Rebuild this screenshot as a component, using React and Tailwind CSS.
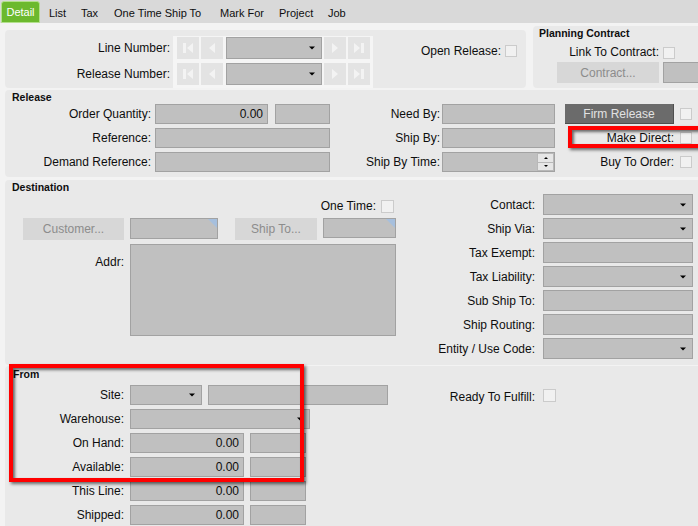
import React from "react";

// Release line detail form — gray desktop-style panels

const Cb = ({ className = "" }) => (
  <div className={`w-[12px] h-[12px] shrink-0 bg-[#f1f1f1] border border-[#cbcbcb] ${className}`} />
);

const Box = ({ className = "", children }) => (
  <div className={`relative shrink-0 bg-[#c0c0c0] border border-[#a2a2a2] ${className}`}>{children}</div>
);

const Arrow = () => (
  <span className="absolute right-[6px] top-1/2 -translate-y-1/2 border-x-[3px] border-x-transparent border-t-[3px] border-t-black" />
);

const Num = ({ children }) => (
  <span className="absolute right-[4px] inset-y-0 flex items-center">{children}</span>
);

const Corner = () => (
  <span className="absolute block w-0 h-0 top-0 right-0 border-solid border-l-[9px] border-l-transparent border-t-[9px] border-t-[#a6bfdd]" />
);

function NavBtn({ kind }) {
  return (
    <div className="w-[22px] h-[22px] shrink-0 bg-[#e3e3e3] flex items-center justify-center">
      <svg width="14" height="14" viewBox="0 0 14 14" fill="#f3f3f3">
        {kind === "first" && (
          <>
            <rect x="2" y="2" width="3" height="10" />
            <polygon points="12,2 12,12 6,7" />
          </>
        )}
        {kind === "prev" && <polygon points="10,2 10,12 4,7" />}
        {kind === "next" && <polygon points="4,2 4,12 10,7" />}
        {kind === "last" && (
          <>
            <polygon points="2,2 2,12 8,7" />
            <rect x="9" y="2" width="3" height="10" />
          </>
        )}
      </svg>
    </div>
  );
}

function NavRow() {
  return (
    <div className="flex gap-[2px] h-[22px]">
      <NavBtn kind="first" />
      <NavBtn kind="prev" />
      <Box className="ml-[1px] w-[96px] h-[22px]">
        <Arrow />
      </Box>
      <NavBtn kind="next" />
      <NavBtn kind="last" />
    </div>
  );
}

const Label = ({ className = "", children }) => (
  <div className={`shrink-0 text-right whitespace-nowrap ${className}`}>{children}</div>
);

const GrayBtn = ({ className = "", children }) => (
  <div className={`shrink-0 bg-[#d7d7d7] text-[#8c8c8c] flex items-center justify-center ${className}`}>
    {children}
  </div>
);

export default function App() {
  return (
    <div className="relative w-[698px] h-[526px] overflow-hidden bg-[#f3f3f3] text-[12px] text-[#0e0e0e] font-['Liberation_Sans',Arial,sans-serif] leading-none">
      {/* Tabs */}
      <div className="h-[23px] bg-[#d9d9d9] flex items-end text-[11px]">
        <div className="ml-[1px] w-[39px] h-[22px] bg-[#6cb92e] border border-[#b3e08c] rounded-t-[3px] text-white flex items-center justify-center">
          Detail
        </div>
        <div className="ml-[9px] w-[32px] h-[22px] flex items-center pt-[2px]">List</div>
        <div className="w-[33px] h-[22px] flex items-center pt-[2px]">Tax</div>
        <div className="w-[106px] h-[22px] flex items-center pt-[2px]">One Time Ship To</div>
        <div className="w-[59px] h-[22px] flex items-center pt-[2px]">Mark For</div>
        <div className="w-[49px] h-[22px] flex items-center pt-[2px]">Project</div>
        <div className="h-[22px] flex items-center pt-[2px]">Job</div>
      </div>

      {/* Top row */}
      <div className="flex items-start pt-[3px]">
        <div className="shrink-0 ml-[5px] mt-[4px] w-[521px] h-[58px] bg-[#e9e9e9] rounded-[4px] flex pt-[6px]">
          <div className="w-[165px] shrink-0 flex flex-col pt-[1px]">
            <Label className="h-[22px] flex items-center justify-end">Line Number:</Label>
            <Label className="mt-[4px] h-[22px] flex items-center justify-end">Release Number:</Label>
          </div>
          <div className="shrink-0 ml-[3px] w-[200px] h-[52px] bg-[#f5f5f5] pl-[4px] pt-[1px] flex flex-col gap-[4px]">
            <NavRow />
            <NavRow />
          </div>
          <div className="flex-1 flex items-center justify-end pr-[9px] h-[28px] pt-[2px]">
            <span className="mr-[4px]">Open Release:</span>
            <Cb />
          </div>
        </div>
        <div className="shrink-0 ml-[7px] w-[170px] h-[62px] bg-[#e9e9e9] rounded-l-[4px] flex flex-col">
          <div className="h-[14px] pl-[6px] flex items-center font-bold text-[10.5px]">Planning Contract</div>
          <div className="mt-[2px] h-[20px] flex items-center">
            <Label className="w-[126px]">Link To Contract:</Label>
            <Cb className="ml-[4px] mt-[2px]" />
          </div>
          <div className="flex">
            <GrayBtn className="ml-[24px] w-[102px] h-[21px]">Contract...</GrayBtn>
            <Box className="ml-[4px] w-[40px] h-[21px]" />
          </div>
        </div>
      </div>

      {/* Release */}
      <div className="ml-[5px] mt-[2px] w-[700px] h-[87px] bg-[#e9e9e9] rounded-[4px] flex flex-col">
        <div className="h-[14px] pl-[7px] flex items-center font-bold text-[10.5px] pt-[1px]">Release</div>
        <div className="flex">
          <div className="w-[325px] shrink-0 flex flex-col gap-[4px]">
            <div className="h-[20px] flex items-center">
              <Label className="w-[146px]">Order Quantity:</Label>
              <Box className="ml-[4px] w-[113px] h-[20px]"><Num>0.00</Num></Box>
              <Box className="ml-[7px] w-[55px] h-[20px]" />
            </div>
            <div className="h-[20px] flex items-center">
              <Label className="w-[146px]">Reference:</Label>
              <Box className="ml-[4px] w-[175px] h-[20px]" />
            </div>
            <div className="h-[20px] flex items-center">
              <Label className="w-[146px]">Demand Reference:</Label>
              <Box className="ml-[4px] w-[175px] h-[20px]" />
            </div>
          </div>
          <div className="w-[225px] shrink-0 flex flex-col gap-[4px]">
            <div className="h-[20px] flex items-center">
              <Label className="w-[110px]">Need By:</Label>
              <Box className="ml-[2px] w-[113px] h-[20px]" />
            </div>
            <div className="h-[20px] flex items-center">
              <Label className="w-[110px]">Ship By:</Label>
              <Box className="ml-[2px] w-[113px] h-[20px]" />
            </div>
            <div className="h-[20px] flex items-center">
              <Label className="w-[110px]">Ship By Time:</Label>
              <Box className="ml-[2px] w-[113px] h-[20px]">
                <div className="absolute right-0 top-0 w-[17px] h-full flex flex-col">
                  <div className="flex-1 bg-[#e6e6e6] border border-[#b8b8b8] flex items-center justify-center">
                    <span className="border-x-[2px] border-x-transparent border-b-[2px] border-b-black" />
                  </div>
                  <div className="flex-1 bg-[#e6e6e6] border border-t-0 border-[#b8b8b8] flex items-center justify-center">
                    <span className="border-x-[2px] border-x-transparent border-t-[2px] border-t-black" />
                  </div>
                </div>
              </Box>
            </div>
          </div>
          <div className="flex flex-col gap-[4px]">
            <div className="h-[20px] flex items-center">
              <div className="ml-[10px] w-[109px] h-[20px] bg-[#6b6b6b] border-r border-b border-[#4e4e4e] text-[#e2e2e2] flex items-center justify-center">
                Firm Release
              </div>
              <Cb className="ml-[6px]" />
            </div>
            <div className="h-[20px] flex items-center">
              <Label className="w-[119px]">Make Direct:</Label>
              <Cb className="ml-[6px]" />
            </div>
            <div className="h-[20px] flex items-center">
              <Label className="w-[119px]">Buy To Order:</Label>
              <Cb className="ml-[6px]" />
            </div>
          </div>
        </div>
      </div>

      {/* Destination */}
      <div className="ml-[5px] mt-[3px] w-[700px] h-[185px] bg-[#e9e9e9] rounded-[4px] flex flex-col">
        <div className="h-[14px] pl-[7px] flex items-center font-bold text-[10.5px]">Destination</div>
        <div className="flex">
          <div className="w-[395px] shrink-0 flex flex-col">
            <div className="h-[21px] flex items-center justify-end pr-[6px] pt-[3px]">
              <span className="mr-[5px]">One Time:</span>
              <Cb className="w-[13px] h-[13px]" />
            </div>
            <div className="mt-[3px] h-[22px] flex items-start">
              <GrayBtn className="ml-[18px] w-[101px] h-[22px]">Customer...</GrayBtn>
              <Box className="ml-[6px] w-[88px] h-[21px]"><Corner /></Box>
              <GrayBtn className="ml-[17px] w-[82px] h-[22px]">Ship To...</GrayBtn>
              <Box className="ml-[6px] w-[73px] h-[20px]"><Corner /></Box>
            </div>
            <div className="mt-[4px] flex items-start">
              <Label className="w-[119px] pt-[12px]">Addr:</Label>
              <Box className="ml-[6px] w-[266px] h-[92px]" />
            </div>
          </div>
          <div className="flex flex-col gap-[3px]">
            {[
              ["Contact:", true],
              ["Ship Via:", true],
              ["Tax Exempt:", false],
              ["Tax Liability:", true],
              ["Sub Ship To:", false],
              ["Ship Routing:", false],
              ["Entity / Use Code:", true],
            ].map(([label, dd]) => (
              <div key={label} className="h-[21px] flex items-center">
                <Label className="w-[135px]">{label}</Label>
                <Box className="ml-[8px] w-[150px] h-[21px]">{dd && <Arrow />}</Box>
              </div>
            ))}
          </div>
        </div>
      </div>

      {/* From */}
      <div className="ml-[5px] mt-[1px] w-[700px] h-[170px] bg-[#e9e9e9] rounded-[4px] flex flex-col">
        <div className="h-[14px] pl-[8px] flex items-center font-bold text-[10.5px] pt-[2px]">From</div>
        <div className="flex mt-[5px]">
          <div className="w-[395px] shrink-0 flex flex-col gap-[4px]">
            <div className="h-[20px] flex items-center">
              <Label className="w-[119px]">Site:</Label>
              <Box className="ml-[6px] w-[72px] h-[20px]"><Arrow /></Box>
              <Box className="ml-[6px] w-[180px] h-[20px]" />
            </div>
            <div className="h-[20px] flex items-center">
              <Label className="w-[119px]">Warehouse:</Label>
              <Box className="ml-[6px] w-[180px] h-[20px]"><Arrow /></Box>
            </div>
            {["On Hand:", "Available:", "This Line:", "Shipped:"].map((label) => (
              <div key={label} className="h-[20px] flex items-center">
                <Label className="w-[119px]">{label}</Label>
                <Box className="ml-[6px] w-[114px] h-[20px]"><Num>0.00</Num></Box>
                <Box className="ml-[6px] w-[56px] h-[20px]" />
              </div>
            ))}
          </div>
          <div className="h-[20px] flex items-center">
            <Label className="w-[135px] pt-[3px]">Ready To Fulfill:</Label>
            <Cb className="ml-[8px] w-[13px] h-[13px]" />
          </div>
        </div>
      </div>

      {/* Highlight boxes */}
      <div className="absolute left-[568px] top-[126px] w-[140px] h-[22px] border-[4px] border-[#ff0000] shadow-[2px_2px_3px_rgba(0,0,0,0.55),inset_2px_2px_3px_rgba(0,0,0,0.55)]" />
      <div className="absolute left-[9px] top-[364px] w-[295px] h-[118px] border-[4px] border-[#ff0000] shadow-[2px_2px_3px_rgba(0,0,0,0.55),inset_2px_2px_3px_rgba(0,0,0,0.55)]" />
    </div>
  );
}
